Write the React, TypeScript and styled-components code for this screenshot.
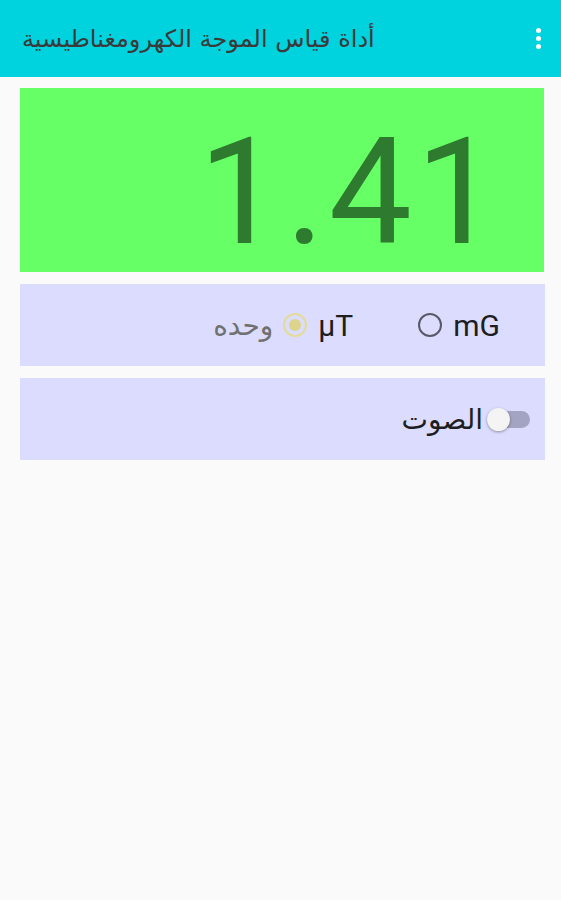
import React from 'react';
import styled, { createGlobalStyle } from 'styled-components';

const GlobalStyle = createGlobalStyle`
  html, body {
    margin: 0;
    padding: 0;
    background: #fafafa;
  }

  body {
    font-family: Roboto, "DejaVu Sans", sans-serif;
  }
`;

const Page = styled.div`
  min-height: 900px;
  background: #fafafa;
`;

const AppBar = styled.header`
  display: flex;
  align-items: center;
  justify-content: space-between;
  height: 77px;
  padding: 0 16px 0 22px;
  box-sizing: border-box;
  background: #00d2de;
`;

const Title = styled.h1`
  margin: 0;
  font-family: "DejaVu Sans", sans-serif;
  font-size: 24px;
  font-weight: normal;
  color: #3a3a3a;
`;

const MenuButton = styled.div`
  display: flex;
  flex-direction: column;
  gap: 3px;
  padding: 4px;

  > span {
    width: 5px;
    height: 5px;
    border-radius: 50%;
    background: #fff;
  }
`;

const Content = styled.main`
  display: flex;
  flex-direction: column;
  gap: 12px;
  padding: 11px 16px 0 20px;
`;

const Reading = styled.div`
  display: flex;
  align-items: center;
  justify-content: flex-end;
  height: 184px;
  margin-right: 1px;
  padding: 24px 41px 0 0;
  box-sizing: border-box;
  background: #66ff66;
  font-family: Roboto, sans-serif;
  font-size: 148px;
  letter-spacing: 4px;
  line-height: normal;
  color: #2e7a2e;
`;

const Card = styled.section`
  display: flex;
  align-items: center;
  justify-content: flex-end;
  height: 82px;
  box-sizing: border-box;
  background: #dcdcfe;
`;

const UnitRow = styled.div`
  display: flex;
  align-items: center;
  flex-direction: row-reverse;
  padding-right: 45px;
`;

const Radio = styled.label`
  display: flex;
  align-items: center;
  gap: 11px;
  font-family: Roboto, sans-serif;
  font-size: 30px;
  color: #1e1e1e;

  & + & {
    margin-right: 65px;
  }
`;

const RadioCircle = styled.span<{ $checked?: boolean }>`
  position: relative;
  width: 24px;
  height: 24px;
  border-radius: 50%;
  box-sizing: border-box;
  border: 2px solid ${(p) => (p.$checked ? '#e2dc98' : '#5a5a66')};

  &::after {
    content: '';
    display: ${(p) => (p.$checked ? 'block' : 'none')};
    position: absolute;
    inset: 4px;
    border-radius: 50%;
    background: #dcd48a;
  }
`;

const UnitLabel = styled.span`
  font-family: "DejaVu Sans", sans-serif;
  font-size: 28px;
  color: #707070;
  margin-right: 10px;
`;

const SoundRow = styled.div`
  display: flex;
  align-items: center;
  gap: 4px;
  padding-right: 15px;
`;

const SoundLabel = styled.span`
  font-family: "DejaVu Sans", sans-serif;
  font-size: 28px;
  color: #1e1e1e;
`;

const Switch = styled.span`
  position: relative;
  width: 43px;
  height: 17px;
  border-radius: 9px;
  background: #a3a3c4;

  &::after {
    content: '';
    position: absolute;
    left: 0;
    top: -3px;
    width: 23px;
    height: 23px;
    border-radius: 50%;
    background: #f4f4f4;
    box-shadow: 0 1px 3px rgba(0, 0, 0, 0.35);
  }
`;

export default function App() {
  return (
    <Page>
      <GlobalStyle />
      <AppBar>
        <Title>أداة قياس الموجة الكهرومغناطيسية</Title>
        <MenuButton>
          <span />
          <span />
          <span />
        </MenuButton>
      </AppBar>

      <Content>
        <Reading>1.41</Reading>

        <Card>
          <UnitRow>
            <Radio>
              <RadioCircle />
              mG
            </Radio>
            <Radio>
              <RadioCircle $checked />
              µT
            </Radio>
            <UnitLabel>وحده</UnitLabel>
          </UnitRow>
        </Card>

        <Card>
          <SoundRow>
            <SoundLabel>الصوت</SoundLabel>
            <Switch />
          </SoundRow>
        </Card>
      </Content>
    </Page>
  );
}
